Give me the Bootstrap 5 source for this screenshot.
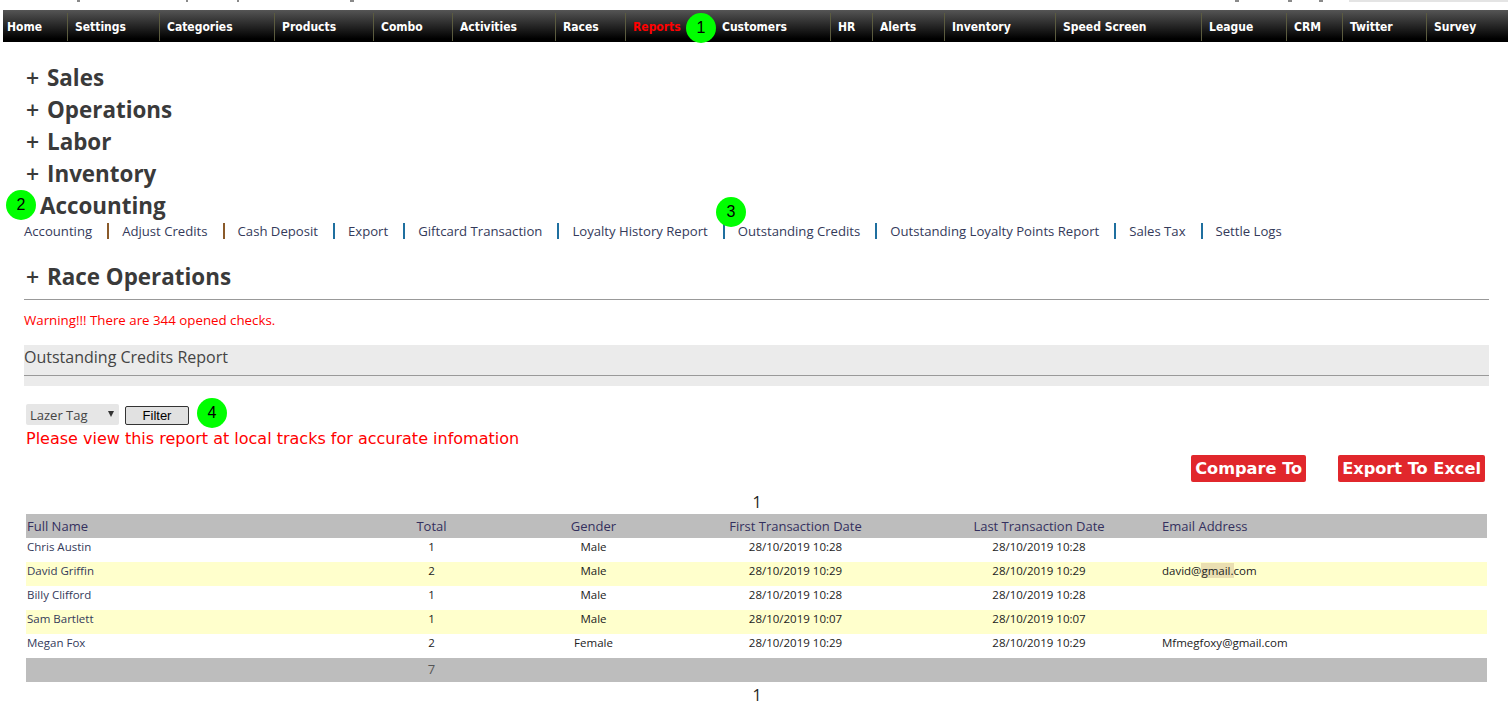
<!DOCTYPE html>
<html lang="en">
<head>
<meta charset="utf-8">
<title>Outstanding Credits Report</title>
<link rel="stylesheet" href="https://cdn.jsdelivr.net/npm/bootstrap@5.3.0/dist/css/bootstrap.min.css">
<style>
body{font-family:"Open Sans","Noto Sans",sans-serif;color:#333;background:#fff;height:717px;overflow:hidden;font-size:13px}
.topcut{height:10px;display:flex;align-items:flex-start}
.tick{height:2px;background:#8a8a8a}
.topcut-search{height:2px;width:159px;background:#e4e4e4;margin-left:auto}
.mainbar{margin:0 0 0 3px;height:32px;background:linear-gradient(#555 0,#2a2a2a 45%,#000 90%,#000 100%);display:flex;align-items:center;font-family:"DejaVu Sans Condensed","DejaVu Sans",sans-serif;font-weight:700;font-size:12px;list-style:none;padding:0}
.mainbar a{color:#fff;text-decoration:none;display:block;line-height:28px;height:28px;margin-top:2px;border-left:1px solid #5b5b3f;padding-left:7px;white-space:nowrap}
.mainbar li:first-child a{border-left:0;padding-left:4px}
.mainbar a.cur{color:#f00}
.marker{position:absolute;background:#0f0;color:#000;border-radius:50%;width:30px;height:30px;text-align:center;font-family:"Liberation Sans",sans-serif;font-size:16px;line-height:30px}
.sect{font-size:22.4px;font-weight:700;line-height:32px;margin:0;color:#3a3a3a;padding-left:26px;display:flex}
.sect .pm{font-weight:600;font-size:23px;width:21px}
.sectwrap{padding-top:20px}
.sublinks{display:flex;padding-left:24px;height:24px;align-items:center;font-size:13.15px;margin-top:-3px}
.sublinks a{color:#343a5a;text-decoration:none;padding:0 15px 0 13px;border-left:2px solid #1f6f9f;line-height:16px;white-space:nowrap}
.sublinks a.brn{border-left-color:#8a5a2a}
.sublinks a:first-child{border-left:0;padding-left:0}
.rule{height:1px;background:#999;margin:0 19px 0 24px}
.warn{color:#f00;font-size:13.3px;margin:11px 0 0 24px;line-height:18px}
.rephead{background:#ebebeb;margin:16px 19px 0 24px;height:41px;position:relative}
.rephead span{display:block;font-size:16px;line-height:24px;color:#444}
.rephead i{position:absolute;left:0;right:0;top:30px;height:1px;background:#999}
.filterrow{display:flex;align-items:center;margin:17px 0 0 26px;height:22px;gap:6px}
.fakeselect{width:93px;height:21px;background:#e6e6e6;border-radius:2px;font-size:13px;line-height:22px;padding-left:4px;color:#444;position:relative}
.fakeselect::after{content:"";position:absolute;right:5px;top:7px;border-left:3.5px solid transparent;border-right:3.5px solid transparent;border-top:6px solid #333}
.fbtn{width:64px;height:19px;border:1px solid #333;background:#e1e1e1;border-radius:2px;font-family:"Liberation Sans",sans-serif;font-size:13px;line-height:17px;padding:0;color:#000;margin-top:2px}
.notice{font-family:"DejaVu Sans",sans-serif;color:#f00;font-size:16px;line-height:20px;margin:4px 0 0 26px}
.actions{display:flex;justify-content:flex-end;gap:32px;margin:6px 23px 0 0}
.rbtn{background:#e1272c;color:#fff;font-family:"DejaVu Sans",sans-serif;font-weight:700;font-size:16.2px;line-height:27px;height:27px;padding:0 4px;border:0;border-radius:2px}
.pager{text-align:center;font-size:16px;line-height:20px;color:#222;width:1514px}
.pager1{margin-top:10px;margin-bottom:2px}
.rep{margin:0 21px 0 26px;width:1461px;table-layout:fixed;border-collapse:collapse;font-size:11.5px;color:#222}
.rep th{background:#bdbdbd;font-weight:400;color:#34305e;font-size:13px;height:24px;padding:1px 1px 0;text-align:center}
.rep td{height:24px;padding:0 1px;text-align:center;vertical-align:top;line-height:18px;color:#222}
.rep td:nth-child(5),.rep th:nth-child(5){padding-left:19px}
.rep tbody tr:nth-child(even) td{background:#ffc}
.rep .lft{text-align:left}
.rep .nm{color:#343a5a}
.rep tfoot td{background:#bdbdbd;font-size:13px;color:#555;vertical-align:top;line-height:22px}
.hl{background:#eadfb2}
</style>
</head>
<body>
<div class="topcut"><span class="tick" style="width:3px;margin-left:77px"></span><span class="tick" style="width:2px;margin-left:106px"></span><span class="tick" style="width:2px;margin-left:49px"></span><span class="tick" style="width:4px;margin-left:111px"></span><span class="tick" style="width:4px;margin-left:881px"></span><span class="tick" style="width:4px;margin-left:49px"></span><span class="tick" style="width:4px;margin-left:27px"></span><div class="topcut-search"></div></div>
<ul class="mainbar">
<li style="width:64px"><a href="#">Home</a></li><li style="width:92px"><a href="#">Settings</a></li><li style="width:115px"><a href="#">Categories</a></li><li style="width:99px"><a href="#">Products</a></li><li style="width:79px"><a href="#">Combo</a></li><li style="width:103px"><a href="#">Activities</a></li><li style="width:70px"><a href="#">Races</a></li><li style="width:97px"><a class="cur" href="#">Reports</a></li><li style="width:108px"><a href="#" style="border-left:0;padding-left:0">Customers</a></li><li style="width:42px"><a href="#">HR</a></li><li style="width:72px"><a href="#">Alerts</a></li><li style="width:111px"><a href="#">Inventory</a></li><li style="width:146px"><a href="#">Speed Screen</a></li><li style="width:85px"><a href="#">League</a></li><li style="width:56px"><a href="#">CRM</a></li><li style="width:84px"><a href="#">Twitter</a></li><li><a href="#">Survey</a></li>
</ul>
<div class="marker" style="left:686px;top:13px">1</div>
<div class="marker" style="left:6px;top:190px">2</div>
<div class="marker" style="left:716px;top:197px">3</div>
<div class="marker" style="left:197px;top:398px">4</div>
<div class="sectwrap">
<h4 class="sect"><span class="pm">+</span>Sales</h4>
<h4 class="sect"><span class="pm">+</span>Operations</h4>
<h4 class="sect"><span class="pm">+</span>Labor</h4>
<h4 class="sect"><span class="pm">+</span>Inventory</h4>
<h4 class="sect" style="padding-left:40px">Accounting</h4>
</div>
<nav class="sublinks">
<a href="#">Accounting</a><a class="brn" href="#">Adjust Credits</a><a class="brn" href="#">Cash Deposit</a><a href="#">Export</a><a href="#">Giftcard Transaction</a><a href="#">Loyalty History Report</a><a href="#">Outstanding Credits</a><a href="#">Outstanding Loyalty Points Report</a><a href="#">Sales Tax</a><a href="#">Settle Logs</a>
</nav>
<h4 class="sect" style="margin-top:18px"><span class="pm">+</span>Race Operations</h4>
<div class="rule" style="margin-top:6px"></div>
<p class="warn">Warning!!! There are 344 opened checks.</p>
<div class="rephead"><span>Outstanding Credits Report</span><i></i></div>
<div class="filterrow"><div class="fakeselect">Lazer Tag</div><button class="fbtn" type="button">Filter</button></div>
<p class="notice">Please view this report at local tracks for accurate infomation</p>
<div class="actions"><button class="rbtn" type="button">Compare To</button><button class="rbtn" type="button">Export To Excel</button></div>
<div class="pager pager1">1</div>
<table class="rep">
<colgroup><col style="width:342px"><col style="width:127px"><col style="width:197px"><col style="width:207px"><col style="width:262px"><col></colgroup>
<thead><tr><th class="lft">Full Name</th><th>Total</th><th>Gender</th><th>First Transaction Date</th><th>Last Transaction Date</th><th class="lft">Email Address</th></tr></thead>
<tbody>
<tr><td class="lft nm">Chris Austin</td><td>1</td><td>Male</td><td>28/10/2019 10:28</td><td>28/10/2019 10:28</td><td class="lft"></td></tr>
<tr><td class="lft nm">David Griffin</td><td>2</td><td>Male</td><td>28/10/2019 10:29</td><td>28/10/2019 10:29</td><td class="lft">david@<span class="hl">gmail.</span>com</td></tr>
<tr><td class="lft nm">Billy Clifford</td><td>1</td><td>Male</td><td>28/10/2019 10:28</td><td>28/10/2019 10:28</td><td class="lft"></td></tr>
<tr><td class="lft nm">Sam Bartlett</td><td>1</td><td>Male</td><td>28/10/2019 10:07</td><td>28/10/2019 10:07</td><td class="lft"></td></tr>
<tr><td class="lft nm">Megan Fox</td><td>2</td><td>Female</td><td>28/10/2019 10:29</td><td>28/10/2019 10:29</td><td class="lft">Mfmegfoxy@gmail.com</td></tr>
</tbody>
<tfoot><tr><td></td><td>7</td><td></td><td></td><td></td><td></td></tr></tfoot>
</table>
<div class="pager" style="margin-top:3px">1</div>
<script src="https://cdn.jsdelivr.net/npm/bootstrap@5.3.0/dist/js/bootstrap.bundle.min.js"></script>
</body>
</html>
